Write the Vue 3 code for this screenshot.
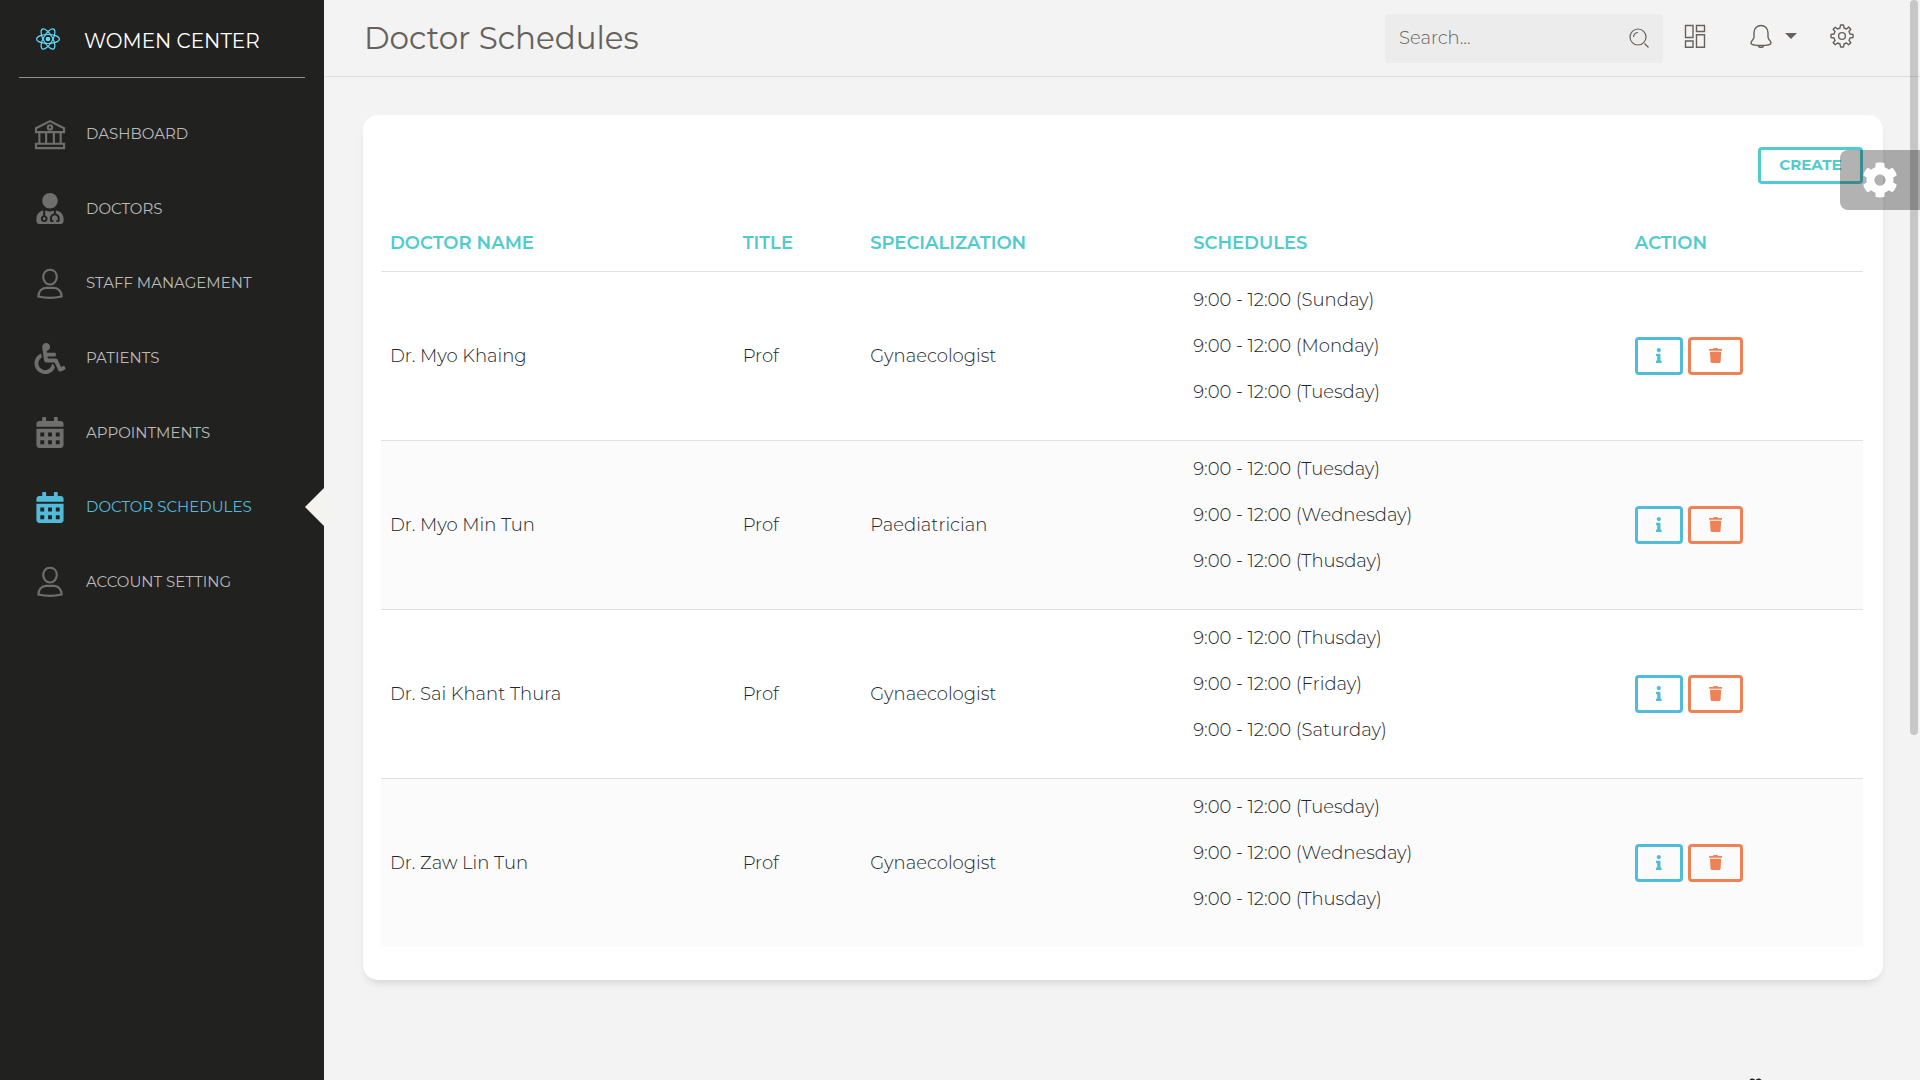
<script setup>
import { ref } from 'vue'

const search = ref('')
const calendar =
  'M0 464c0 26.500 21.500 48 48 48h352c26.500 0 48-21.500 48-48V192H0v272zM64 256h64v64H64zM192 256h64v64h-64zM320 256h64v64h-64zM64 384h64v64H64zM192 384h64v64h-64zM320 384h64v64h-64zM400 64h-48V16c0-8.800-7.200-16-16-16h-32c-8.800 0-16 7.200-16 16v48H160V16c0-8.800-7.200-16-16-16h-32c-8.800 0-16 7.200-16 16v48H48C21.500 64 0 85.500 0 112v48h448v-48c0-26.500-21.500-48-48-48z'
const doctor =
  'M224 256c70.7 0 128-57.3 128-128S294.7 0 224 0 96 57.3 96 128s57.3 128 128 128zM104 424c0 13.3 10.7 24 24 24s24-10.7 24-24-10.7-24-24-24-24 10.7-24 24zm216-135.4v49c36.5 7.4 64 39.8 64 78.4v41.7c0 7.6-5.4 14.2-12.9 15.7l-32.2 6.4c-4.3.9-8.5-1.9-9.4-6.3l-3.1-15.7c-.9-4.3 1.9-8.6 6.3-9.4l19.3-3.900V416c0-62.8-96-65.1-96 1.9v26.7l19.3 3.9c4.3.9 7.1 5.1 6.3 9.4l-3.1 15.7c-.9 4.3-5.1 7.1-9.4 6.3l-31.2-4.2c-7.9-1.1-13.8-7.800-13.800-15.900V416c0-38.600 27.500-70.900 64-78.400v-45.200c-2.200.7-4.400 1.100-6.600 1.900-18 6.300-37.300 9.800-57.400 9.800s-39.400-3.500-57.400-9.800c-7.400-2.600-14.900-4.200-22.600-5.200v81.600c23.100 6.900 40 28.100 40 53.400 0 30.900-25.100 56-56 56s-56-25.100-56-56c0-25.300 16.900-46.500 40-53.400v-80.400C48.500 301 0 355.800 0 422.400v44.800C0 491.900 20.100 512 44.800 512h358.400c24.700 0 44.800-20.100 44.800-44.800v-44.800c0-72-56.800-130.300-128-133.800z'
const wheelchair =
  'M496.101 385.669l14.227 28.663c3.929 7.915.697 17.516-7.218 21.445l-65.465 32.886c-16.049 7.967-35.556 1.194-43.189-15.055L331.679 320H192c-15.925 0-29.426-11.71-31.679-27.475C126.433 55.308 128.38 70.044 128 64c0-36.358 30.318-65.635 67.052-63.929 33.271 1.545 60.048 28.905 60.925 62.201.868 32.933-23.152 60.423-54.608 65.039l4.67 32.69H336c8.837 0 16 7.163 16 16v32c0 8.837-7.163 16-16 16H215.182l4.572 32H352a32 32 0 0 1 28.962 18.392L438.477 396.8l36.178-18.349c7.915-3.929 17.517-.697 21.446 7.218zM311.358 352h-24.506c-7.788 54.204-54.528 96-110.852 96-61.757 0-112-50.243-112-112 0-41.505 22.694-77.809 56.324-97.156-3.712-25.965-6.844-47.86-9.488-66.333C45.956 198.464 0 261.963 0 336c0 97.047 78.953 176 176 176 71.87 0 133.806-43.308 161.11-105.192L311.358 352z'

const nav = [
  { label: 'DASHBOARD', icon: 'bank' },
  { label: 'DOCTORS', path: doctor, box: '0 0 448 512' },
  { label: 'STAFF MANAGEMENT', icon: 'user' },
  { label: 'PATIENTS', path: wheelchair, box: '0 0 512 512' },
  { label: 'APPOINTMENTS', path: calendar, box: '0 0 448 512' },
  { label: 'DOCTOR SCHEDULES', path: calendar, box: '0 0 448 512', active: true },
  { label: 'ACCOUNT SETTING', icon: 'user' },
]

const columns = ['DOCTOR NAME', 'TITLE', 'SPECIALIZATION', 'SCHEDULES', 'ACTION']
const rows = [
  { name: 'Dr. Myo Khaing', title: 'Prof', field: 'Gynaecologist', days: ['Sunday', 'Monday', 'Tuesday'] },
  { name: 'Dr. Myo Min Tun', title: 'Prof', field: 'Paediatrician', days: ['Tuesday', 'Wednesday', 'Thusday'] },
  { name: 'Dr. Sai Khant Thura', title: 'Prof', field: 'Gynaecologist', days: ['Thusday', 'Friday', 'Saturday'] },
  { name: 'Dr. Zaw Lin Tun', title: 'Prof', field: 'Gynaecologist', days: ['Tuesday', 'Wednesday', 'Thusday'] },
]
</script>

<template>
  <div class="app">
    <aside class="sidebar">
      <a class="brand" href="#">
        <svg class="brand-logo" viewBox="-12 -12 24 24" fill="none" stroke="#61dafb" stroke-width="1.2">
          <circle r="2.3" fill="#61dafb" stroke="none" />
          <ellipse rx="11.4" ry="4.5" />
          <ellipse rx="11.4" ry="4.5" transform="rotate(60)" />
          <ellipse rx="11.4" ry="4.5" transform="rotate(120)" />
        </svg>
        <span>WOMEN CENTER</span>
      </a>
      <nav class="nav">
        <a v-for="item in nav" :key="item.label" href="#" class="nav-link" :class="{ active: item.active }">
          <svg v-if="item.path" class="nav-icon" :viewBox="item.box" fill="currentColor" fill-rule="evenodd">
            <path :d="item.path" />
          </svg>
          <svg v-else-if="item.icon === 'bank'" class="nav-icon" viewBox="0 0 32 32" fill="none" stroke="currentColor" stroke-width="2.2">
            <path d="M1.500 13.500V9.500L16 2.200l14.500 7.300v4zM1.500 25.500h29v4.500h-29zM5 14v11M12 14v11M20 14v11M27 14v11" />
            <circle cx="16" cy="8.700" r="2.200" />
          </svg>
          <svg v-else class="nav-icon" viewBox="0 0 32 32" fill="none" stroke="currentColor" stroke-width="2.2">
            <path d="M16 1.800c4.400 0 7 3.300 7 7.500S20 17 16 17s-7-3.500-7-7.700S11.600 1.800 16 1.800zM4 29.500C4 24 7.500 20.500 12 20.500h8c4.500 0 8 3.500 8 9-7 1.500-17 1.500-24 0z" />
          </svg>
          <span>{{ item.label }}</span>
        </a>
      </nav>
    </aside>

    <div class="main">
      <header class="topbar">
        <h1>Doctor Schedules</h1>
        <div class="tools">
          <form class="search" @submit.prevent>
            <input v-model="search" type="text" placeholder="Search..." aria-label="Search" />
            <svg viewBox="0 0 20 20" fill="none" stroke="currentColor" stroke-width="1.2">
              <circle cx="9" cy="9" r="8" />
              <path d="M15.500 15.500l4 4M4.500 9A4.500 4.500 0 0 1 9 4.500" />
            </svg>
          </form>
          <button class="tool" type="button" aria-label="Layout">
            <svg viewBox="0 0 24 24" fill="none" stroke="currentColor" stroke-width="1.4">
              <path d="M2.500 1.500h7.500v12H2.500zM13.500 1.500h8v6h-8zM2.500 17H10v6.300H2.500zM13.500 10.800h8v12.500h-8z" />
            </svg>
          </button>
          <button class="tool bell" type="button" aria-label="Notifications">
            <svg viewBox="0 0 24 24" fill="none" stroke="currentColor" stroke-width="1.4">
              <path d="M19 13V8.500a7 7 0 0 0-14 0V13c0 3-3 3.500-3 6 0 1.500 4 2.500 10 2.500s10-1 10-2.500c0-2.500-3-3-3-6zM9 21.500c.5 2.500 5.500 2.500 6 0" />
            </svg>
            <span class="caret"></span>
          </button>
          <button class="tool" type="button" aria-label="Settings">
            <svg viewBox="0 0 24 24" fill="none" stroke="currentColor" stroke-width="1.4" stroke-linejoin="round">
              <circle cx="12" cy="12" r="3.400" />
              <path d="M23 13.500v-3l-3-.5-1-2.500 1.800-2.300-2.100-2.100L16.400 5 14 4l-.5-3h-3L10 4 7.500 5 5.300 3.200 3.200 5.300 5 7.600 4 10l-3 .5v3l3 .5 1 2.500-1.800 2.200 2.100 2.100L7.600 19l2.400 1 .5 3h3l.5-3 2.500-1 2.200 1.800 2.100-2.100L19 16.400l1-2.400z" />
            </svg>
          </button>
        </div>
      </header>

      <main class="content">
        <section class="card">
          <div class="card-head">
            <button class="btn create" type="button">CREATE</button>
          </div>
          <table>
            <colgroup>
              <col class="c-name" /><col class="c-title" /><col class="c-field" /><col class="c-days" /><col class="c-action" />
            </colgroup>
            <thead>
              <tr><th v-for="c in columns" :key="c" scope="col">{{ c }}</th></tr>
            </thead>
            <tbody>
              <tr v-for="r in rows" :key="r.name">
                <td>{{ r.name }}</td>
                <td>{{ r.title }}</td>
                <td>{{ r.field }}</td>
                <td><p v-for="d in r.days" :key="d">9:00 - 12:00 ({{ d }})</p></td>
                <td>
                  <div class="actions">
                    <button class="btn info" type="button" aria-label="Details">
                      <svg viewBox="0 0 192 512" fill="currentColor">
                        <path d="M20 424.229h20V279.771H20c-11.046 0-20-8.954-20-20V212c0-11.046 8.954-20 20-20h112c11.046 0 20 8.954 20 20v212.229h20c11.046 0 20 8.954 20 20V492c0 11.046-8.954 20-20 20H20c-11.046 0-20-8.954-20-20v-47.771c0-11.046 8.954-20 20-20zM96 0C56.235 0 24 32.235 24 72s32.235 72 72 72 72-32.235 72-72S135.764 0 96 0z" />
                      </svg>
                    </button>
                    <button class="btn danger" type="button" aria-label="Delete">
                      <svg viewBox="0 0 448 512" fill="currentColor">
                        <path d="M432 32H312l-9.4-18.7A24 24 0 0 0 281.1 0H166.8a23.72 23.72 0 0 0-21.4 13.3L136 32H16A16 16 0 0 0 0 48v32a16 16 0 0 0 16 16h416a16 16 0 0 0 16-16V48a16 16 0 0 0-16-16zM53.2 467a48 48 0 0 0 47.9 45h245.8a48 48 0 0 0 47.9-45L416 128H32z" />
                      </svg>
                    </button>
                  </div>
                </td>
              </tr>
            </tbody>
          </table>
        </section>
      </main>

      <footer class="footer">
        <svg viewBox="0 0 14 13" fill="#252422">
          <path d="M7 13L1 7C-1 4.500 0 0 3.500 0 5.500 0 7 2 7 2s1.500-2 3.500-2C14 0 15 4.500 13 7z" />
        </svg>
      </footer>
    </div>

    <button class="fixed-settings" type="button" aria-label="Theme settings">
      <svg viewBox="0 0 512 512" fill="currentColor">
        <path d="M487.4 315.7l-42.6-24.6c4.3-23.2 4.3-47 0-70.2l42.6-24.6c4.9-2.8 7.1-8.6 5.5-14-11.1-35.6-30-67.8-54.7-94.6-3.8-4.1-10-5.1-14.8-2.3L380.8 110c-17.9-15.4-38.5-27.3-60.8-35.1V25.8c0-5.6-3.9-10.5-9.4-11.7-36.7-8.2-74.3-7.8-109.2 0-5.5 1.2-9.4 6.1-9.4 11.7V75c-22.2 7.9-42.8 19.8-60.8 35.1L88.700 85.500c-4.900-2.800-11-1.900-14.800 2.300-24.700 26.700-43.600 58.900-54.700 94.600-1.700 5.400.6 11.200 5.500 14L67.300 221c-4.300 23.200-4.300 47 0 70.200l-42.600 24.600c-4.900 2.800-7.100 8.600-5.500 14 11.100 35.600 30 67.800 54.700 94.600 3.800 4.100 10 5.100 14.800 2.300l42.600-24.600c17.900 15.400 38.500 27.300 60.800 35.100v49.200c0 5.600 3.900 10.500 9.400 11.700 36.700 8.200 74.300 7.800 109.200 0 5.500-1.200 9.400-6.100 9.400-11.700v-49.200c22.200-7.900 42.800-19.800 60.800-35.100l42.600 24.600c4.900 2.800 11 1.900 14.800-2.300 24.700-26.700 43.600-58.900 54.700-94.600 1.500-5.500-.7-11.300-5.600-14.100zM256 336c-44.100 0-80-35.900-80-80s35.900-80 80-80 80 35.900 80 80-35.900 80-80 80z" />
      </svg>
    </button>
    <div class="scroll-thumb"></div>
  </div>
</template>

<style>
body {
  margin: 0;
  background: #f3f3f3;
}
</style>

<style scoped>
* {
  box-sizing: border-box;
}
.app {
  position: relative;
  display: flex;
  height: 100vh;
  overflow: hidden;
  background: #f3f3f3;
  color: #212529;
  font-family: Montserrat, Inter, "Open Sans", sans-serif;
  font-size: 18px;
  font-weight: 300;
  line-height: 26px;
}
button,
input {
  font: inherit;
  color: inherit;
  margin: 0;
}
button {
  cursor: pointer;
}
svg {
  display: block;
  flex: none;
}
a {
  color: inherit;
  text-decoration: none;
}
.sidebar {
  flex: none;
  width: 324px;
  background: #212120;
  font-weight: 400;
}
.brand {
  display: flex;
  align-items: center;
  gap: 24px;
  height: 78px;
  margin: 0 19px;
  padding: 4px 17px 0;
  border-bottom: 1px solid #90908f;
  color: #fff;
  font-size: 20px;
}
.brand-logo {
  width: 24px;
  height: 24px;
  margin-bottom: 4px;
}
.nav {
  display: flex;
  flex-direction: column;
  height: 522px;
  margin-top: 19px;
}
.nav-link {
  position: relative;
  flex: 1;
  display: flex;
  align-items: center;
  gap: 20px;
  padding-left: 34px;
  color: #bababa;
  font-size: 15px;
}
.nav-icon {
  width: 32px;
  height: 31px;
  color: #6f6f6e;
}
.nav-link.active,
.active .nav-icon {
  color: #51bcda;
}
.nav-link.active::after {
  content: "";
  position: absolute;
  right: 0;
  border: 19px solid transparent;
  border-right-color: #f4f3ef;
  border-left-width: 0;
}
.main {
  flex: 1;
  min-width: 0;
}
.topbar {
  display: flex;
  align-items: center;
  justify-content: space-between;
  height: 77px;
  padding: 0 66px 0 40px;
  border-bottom: 1px solid #ddd;
  color: #66615b;
}
h1 {
  margin: 0;
  font-size: 31px;
  font-weight: 400;
  line-height: 40px;
}
.tools {
  display: flex;
  align-items: center;
}
.search {
  display: flex;
  align-items: center;
  width: 278px;
  height: 49px;
  margin-right: 20px;
  padding: 0 14px;
  border-radius: 4px;
  background: #ececec;
}
.search input {
  flex: 1;
  min-width: 0;
  padding: 0;
  border: 0;
  outline: 0;
  background: none;
}
.search input::placeholder {
  color: #66615b;
  opacity: 1;
}
.search svg {
  width: 20px;
  height: 20px;
}
.tool {
  display: flex;
  align-items: center;
  gap: 12px;
  padding: 0 0 4px;
  border: 0;
  background: none;
}
.tool svg {
  width: 24px;
  height: 24px;
}
.bell {
  margin: 0 33px 0 42px;
}
.caret {
  border: 6px solid transparent;
  border-top-color: #66615b;
  border-bottom-width: 0;
}
.content {
  padding: 38px 37px 0 39px;
}
.card {
  padding: 32px 20px 33px 18px;
  border-radius: 15px;
  background: #fff;
  box-shadow: 0 6px 10px -4px rgba(0, 0, 0, 0.15);
}
.card-head {
  display: flex;
  justify-content: flex-end;
  margin-bottom: 31px;
}
.btn {
  display: flex;
  align-items: center;
  justify-content: center;
  height: 38px;
  padding: 0 0 2px;
  border: 3px solid currentColor;
  border-radius: 4px;
  background: none;
}
.btn svg {
  height: 15px;
}
.create {
  width: 105px;
  height: 37px;
  color: #51cbce;
  font-size: 15px;
  font-weight: 700;
}
.info {
  width: 48px;
  color: #51bcda;
}
.danger {
  width: 55px;
  color: #ef8157;
}
.actions {
  display: flex;
  gap: 5px;
}
table {
  width: 100%;
  table-layout: fixed;
  border-collapse: collapse;
}
.c-name {
  width: 23.8%;
}
.c-title {
  width: 8.6%;
}
.c-field {
  width: 21.8%;
}
.c-days {
  width: 29.8%;
}
.c-action {
  width: 16%;
}
th,
td {
  padding: 15px 9px;
  text-align: left;
  vertical-align: middle;
}
th {
  color: #51cbce;
  font-weight: 600;
}
td {
  border-top: 1px solid #dee2e6;
}
tbody tr:nth-child(even) {
  background: #fbfbfb;
}
td p {
  margin: 0 0 20px;
}
.footer {
  display: flex;
  justify-content: flex-end;
  padding: 98px 158px 0 0;
}
.footer svg {
  width: 13px;
  height: 13px;
}
.fixed-settings {
  position: absolute;
  top: 150px;
  right: 0;
  width: 80px;
  height: 60px;
  padding: 0 0 0 22px;
  border: 0;
  border-radius: 8px 0 0 8px;
  background: rgba(0, 0, 0, 0.3);
  color: #fff;
}
.fixed-settings svg {
  width: 36px;
  height: 36px;
}
.scroll-thumb {
  position: absolute;
  top: 0;
  right: 2px;
  width: 8px;
  height: 735px;
  border-radius: 4px;
  background: rgba(0, 0, 0, 0.18);
}
</style>
